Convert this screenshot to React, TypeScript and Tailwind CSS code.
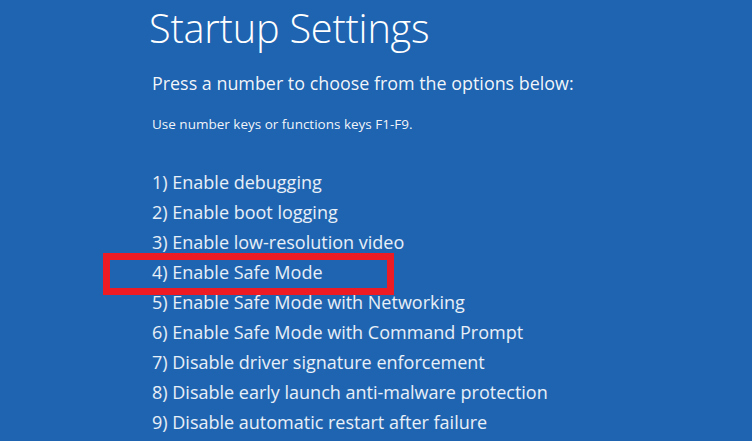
const OPTIONS = [
  '1) Enable debugging',
  '2) Enable boot logging',
  '3) Enable low-resolution video',
  '4) Enable Safe Mode',
  '5) Enable Safe Mode with Networking',
  '6) Enable Safe Mode with Command Prompt',
  '7) Disable driver signature enforcement',
  '8) Disable early launch anti-malware protection',
  '9) Disable automatic restart after failure',
]

export default function App() {
  return (
    <div
      className="relative h-[441px] w-[752px] overflow-hidden bg-[#1f64b0] text-white"
      style={{ fontFamily: '"Open Sans", "Noto Sans", sans-serif' }}
    >
      <div className="flex flex-col pl-[152px] pt-[2px]">
        <h1 className="-ml-[3px] text-[39.7px] font-light leading-[52px] tracking-[-0.2px]">Startup Settings</h1>
        <p className="mt-[16px] text-[17.9px] leading-[26px] text-white/95">Press a number to choose from the options below:</p>
        <p className="mt-[19px] text-[13.5px] leading-[18px] text-white/95">Use number keys or functions keys F1-F9.</p>
        <ul className="mt-[34px] flex flex-col">
          {OPTIONS.map((opt) => (
            <li key={opt} className="h-[30px] text-[18px] leading-[30px] text-white/90">
              {opt}
            </li>
          ))}
        </ul>
      </div>
      {/* annotation highlight */}
      <div className="absolute left-[103px] top-[253px] h-[42px] w-[291px] border-[7px] border-[#ed1c24]" />
    </div>
  )
}
